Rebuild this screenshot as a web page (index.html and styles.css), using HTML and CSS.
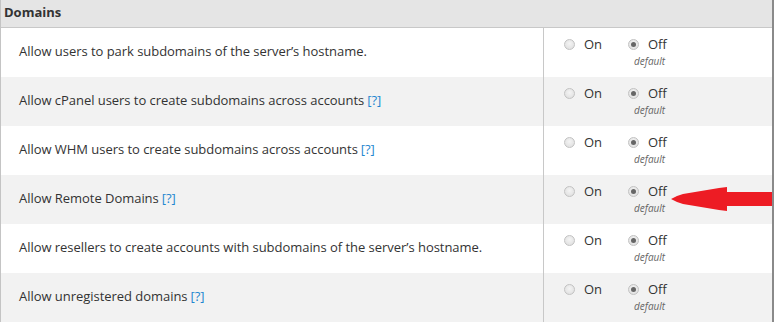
FILE: index.html
```html
<!DOCTYPE html>
<html>
<head>
<meta charset="utf-8">
<link rel="stylesheet" href="styles.css">
</head>
<body>
<div class="panel">
  <div class="head">Domains</div>
  <div class="row">
    <div class="label">Allow users to park subdomains of the server’s hostname.</div>
    <div class="opts">
      <div class="choice"><span class="radio"></span><span class="txt">On</span></div>
      <div class="choice"><span class="radio on"></span><span class="txt">Off</span><span class="def">default</span></div>
    </div>
  </div>
  <div class="row alt">
    <div class="label">Allow cPanel users to create subdomains across accounts <a class="help">[?]</a></div>
    <div class="opts">
      <div class="choice"><span class="radio"></span><span class="txt">On</span></div>
      <div class="choice"><span class="radio on"></span><span class="txt">Off</span><span class="def">default</span></div>
    </div>
  </div>
  <div class="row">
    <div class="label">Allow WHM users to create subdomains across accounts <a class="help">[?]</a></div>
    <div class="opts">
      <div class="choice"><span class="radio"></span><span class="txt">On</span></div>
      <div class="choice"><span class="radio on"></span><span class="txt">Off</span><span class="def">default</span></div>
    </div>
  </div>
  <div class="row alt">
    <div class="label">Allow Remote Domains <a class="help">[?]</a></div>
    <div class="opts">
      <div class="choice"><span class="radio"></span><span class="txt">On</span></div>
      <div class="choice"><span class="radio on"></span><span class="txt">Off</span><span class="def">default</span></div>
    </div>
    <svg class="arrow" width="105" height="26" viewBox="0 0 105 26">
      <polygon fill="#ed1c24" points="0,12 6,9 12,7 18,6 24,5 30,4 36,3 42,2 48,1 56,0 56,5 104,5 104,19 56,19 56,24 48,23 42,22 36,21 30,20 24,19 18,18 12,17 6,15"/>
    </svg>
  </div>
  <div class="row">
    <div class="label">Allow resellers to create accounts with subdomains of the server’s hostname.</div>
    <div class="opts">
      <div class="choice"><span class="radio"></span><span class="txt">On</span></div>
      <div class="choice"><span class="radio on"></span><span class="txt">Off</span><span class="def">default</span></div>
    </div>
  </div>
  <div class="row alt">
    <div class="label">Allow unregistered domains <a class="help">[?]</a></div>
    <div class="opts">
      <div class="choice"><span class="radio"></span><span class="txt">On</span></div>
      <div class="choice"><span class="radio on"></span><span class="txt">Off</span><span class="def">default</span></div>
    </div>
  </div>
</div>
</body>
</html>
```
FILE: styles.css
```css
html, body { margin: 0; padding: 0; background: #fff; }
body {
  font-family: "Open Sans", "Liberation Sans", sans-serif;
  font-size: 13px;
  color: #333;
  width: 775px;
  height: 323px;
  overflow: hidden;
}
.panel {
  width: 771px;
  border-left: 1px solid #c4c4c4;
  border-right: 2px solid #8a8a8a;
  overflow: hidden;
}
.head {
  height: 27px;
  line-height: 25px;
  background: #e5e5e5;
  border-bottom: 1px solid #c8c8c8;
  font-weight: bold;
  padding-left: 3px;
  color: #333;
}
.row {
  position: relative;
  display: flex;
  height: 49px;
  background: #fff;
}
.row.alt { background: #f2f2f2; }
.label {
  width: 524px;
  padding-left: 18px;
  padding-bottom: 3px;
  box-sizing: content-box;
  border-right: 1px solid #c8c8c8;
  display: flex;
  align-items: center;
  letter-spacing: -0.04px;
}
.help { color: #1f87d0; margin-left: 3px; }
.opts {
  display: flex;
  padding-left: 20px;
  padding-top: 8px;
}
.choice {
  position: relative;
  display: flex;
  align-items: flex-start;
  width: 64px;
}
.radio {
  box-sizing: border-box;
  width: 11px;
  height: 11px;
  border-radius: 50%;
  border: 1px solid #c2c2c2;
  background: radial-gradient(circle at 50% 40%, #f4f4f4 0%, #dcdcdc 100%);
  margin-top: 3px;
  margin-right: 9px;
  position: relative;
}
.radio.on::after {
  content: "";
  position: absolute;
  left: 2px; top: 2px;
  width: 5px; height: 5px;
  border-radius: 50%;
  background: #666;
}
.txt { line-height: 17px; font-size: 13px; color: #333; }
.def {
  position: absolute;
  left: 6px;
  top: 18px;
  font-size: 10px;
  font-style: italic;
  color: #666;
}
.arrow {
  position: absolute;
  left: 670px;
  top: 12px;
}
```
